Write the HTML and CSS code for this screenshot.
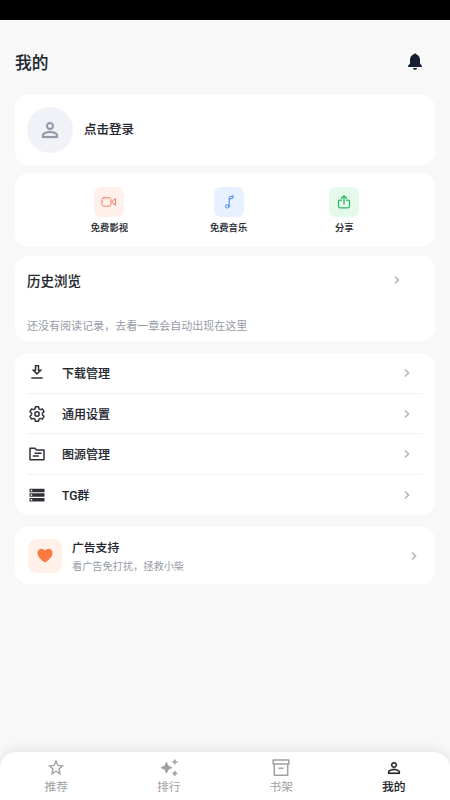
FILE: index.html
```html
<!DOCTYPE html>
<html lang="zh-CN">
<head>
<meta charset="utf-8">
<meta name="viewport" content="width=device-width, initial-scale=1">
<title>我的</title>
<link rel="stylesheet" href="styles.css">
</head>
<body>
<svg class="defs" aria-hidden="true">
  <symbol id="chevron" viewBox="0 0 8 10"><path d="M2 1.500 5.500 5 2 8.500" fill="none" stroke="currentColor" stroke-width="1.700"/></symbol>
  <symbol id="person" viewBox="0 0 24 24"><path fill="currentColor" stroke="currentColor" stroke-width=".2" d="M12 5.900a2.100 2.100 0 1 1 0 4.200 2.100 2.100 0 0 1 0-4.200m0 9c2.970 0 6.100 1.460 6.100 2.100v1.100H5.900V17c0-.64 3.130-2.100 6.100-2.100M12 4C9.790 4 8 5.790 8 8s1.790 4 4 4 4-1.790 4-4-1.790-4-4-4m0 9c-2.670 0-8 1.340-8 4v3h16v-3c0-2.660-5.330-4-8-4"/></symbol>
</svg>
<div class="status-bar"></div>
<header class="header">
  <h1>我的</h1>
  <svg class="bell" viewBox="0 0 16 18"><path fill="currentColor" d="M8 .5c.8 0 1.300.4 1.500 1 2.200.7 3.500 2.700 3.500 5.500v3.500l1.900 2.200v1.200H1.100v-1.200L3 10.500V7c0-2.800 1.300-4.800 3.500-5.500C6.700.9 7.200.5 8 .5M5.900 15h4.200c-.2 1.200-1 1.800-2.100 1.800S6.100 16.200 5.900 15"/></svg>
</header>
<main>
  <section class="card login">
    <div class="avatar"><svg viewBox="0 0 24 24"><use href="#person"/></svg></div>
    <span>点击登录</span>
  </section>
  <section class="card shortcuts">
    <a class="shortcut video"><span class="tile"><svg viewBox="0 0 16 16"><rect x="1" y="3.800" width="9" height="8.400" rx="1.800"/><path d="m11.500 7 3-2.300v6.600l-3-2.300z"/></svg></span>免费影视</a>
    <a class="shortcut music"><span class="tile"><svg viewBox="0 0 16 16"><ellipse cx="6.300" cy="12.400" rx="1.900" ry="1.600"/><path d="M8.200 12.400V3.200L12 1.700V4L8.200 5.500"/></svg></span>免费音乐</a>
    <a class="shortcut share"><span class="tile"><svg viewBox="0 0 16 16"><path d="M5.500 6.200H4c-1 0-1.500.5-1.500 1.500v4.600c0 1 .5 1.500 1.500 1.500h8c1 0 1.500-.5 1.500-1.500V7.700c0-1-.5-1.500-1.500-1.500h-1.500M8 10V2M5.500 4.300 8 1.800l2.500 2.500"/></svg></span>分享</a>
  </section>
  <section class="card history">
    <div class="history-head"><h2>历史浏览</h2><svg class="chevron"><use href="#chevron"/></svg></div>
    <p>还没有阅读记录，去看一章会自动出现在这里</p>
  </section>
  <nav class="card menu">
    <a><svg class="icon" viewBox="0 0 18 18"><path d="M7.500 1.800h3v4.400h2.200L9 9.900 5.300 6.200h2.200zM3.300 13.900h11.400" fill="none" stroke="currentColor" stroke-width="1.500"/></svg><span>下载管理</span><svg class="chevron"><use href="#chevron"/></svg></a>
    <a><svg class="icon" viewBox="0 0 18 18"><path d="m7.400 1.800-.4 2-1.400.8-2-.7L2 6.700l1.600 1.500v1.600L2 11.300l1.600 2.800 2-.7 1.400.8.400 2h3.200l.4-2 1.400-.8 2 .7 1.600-2.800-1.600-1.500V8.200L16 6.700l-1.600-2.800-2 .7-1.400-.8-.4-2z" fill="none" stroke="currentColor" stroke-width="1.500" stroke-linejoin="round"/><circle cx="9" cy="9" r="2.200" fill="none" stroke="currentColor" stroke-width="1.500"/></svg><span>通用设置</span><svg class="chevron"><use href="#chevron"/></svg></a>
    <a><svg class="icon" viewBox="0 0 18 18"><path d="M2 3.300h5l1.500 1.600H16v9.800H2zM6.500 8.200h7M4.800 10.900h6" fill="none" stroke="currentColor" stroke-width="1.500" stroke-linejoin="round"/></svg><span>图源管理</span><svg class="chevron"><use href="#chevron"/></svg></a>
    <a><svg class="icon" viewBox="0 0 18 18"><path fill="currentColor" fill-rule="evenodd" d="M1.500 2.700h15v3.500h-15zm1.200 1v1.500h1.500V3.700zM1.500 7.300h15v3.500h-15zm1.200 1v1.500h1.500V8.300zM1.500 11.900h15v3.500h-15zm1.200 1v1.500h1.500v-1.500z"/></svg><span>TG群</span><svg class="chevron"><use href="#chevron"/></svg></a>
  </nav>
  <section class="card support">
    <span class="heart"><svg viewBox="0 0 16 15"><path fill="currentColor" d="M8 14.500C4 11.600.5 8.600.5 4.900.5 2.400 2.200.7 4.400.7 6 .7 7.300 1.500 8 2.800 8.700 1.500 10 .7 11.600.7c2.200 0 3.900 1.700 3.900 4.200 0 3.700-3.500 6.700-7.500 9.600"/></svg></span>
    <div class="support-text"><h3>广告支持</h3><p>看广告免打扰，拯救小柴</p></div>
    <svg class="chevron"><use href="#chevron"/></svg>
  </section>
</main>
<nav class="tabs">
  <a><svg viewBox="0 0 18 18"><path d="m9 2.200 1.900 4.200 4.500.5-3.400 3.100 1 4.500-4-2.300-4 2.300L6 10 2.600 6.900l4.500-.5z" fill="none" stroke="currentColor" stroke-width="1.400"/></svg>推荐</a>
  <a><svg viewBox="0 0 18 18"><path fill="currentColor" stroke="currentColor" stroke-width=".6" d="m6.500 3.200 1.900 3.700 3.700 1.800-3.700 1.800-1.900 3.700-1.900-3.700L.9 8.700l3.700-1.800zM14.900.4l.8 1.800 1.800.8-1.800.8-.8 1.800-.8-1.800-1.800-.8 1.800-.8zM14.900 11.800l.8 1.800 1.800.8-1.800.8-.8 1.800-.8-1.800-1.800-.8 1.800-.8z"/></svg>排行</a>
  <a><svg viewBox="0 0 18 18"><path d="M1.200 1h15.600v4H1.200zM2.300 5v11.300h13.400V5M6.500 9.300h5" fill="none" stroke="currentColor" stroke-width="1.500" stroke-linejoin="round"/></svg>书架</a>
  <a class="active"><svg viewBox="0 0 24 24"><use href="#person"/></svg>我的</a>
</nav>
</body>
</html>
```
FILE: styles.css
```css
* { box-sizing: border-box; }
body {
  margin: 0;
  height: 800px;
  display: flex;
  flex-direction: column;
  overflow: hidden;
  background: #f8f8f8;
  color: #24272e;
  font-family: Roboto, "Noto Sans CJK SC", sans-serif;
}
h1, h2, h3, p { margin: 0; }
h1, h2, h3 { font-weight: 500; }
h1, h2, h3, .login, .shortcut, .menu, .active { -webkit-text-stroke: .12px currentColor; }
svg { display: block; flex: none; }
.defs { width: 0; height: 0; position: absolute; }
.status-bar { height: 20px; background: #000; flex: none; }
.header {
  height: 75px;
  padding: 9px 27px 0 15px;
  display: flex;
  align-items: center;
  justify-content: space-between;
}
h1 { padding-top: 4px; font-size: 16.700px; line-height: 24px; color: #20252e; }
.bell { width: 16px; height: 18px; color: #172033; }
main { padding: 0 15px; }
.card { background: #fff; border-radius: 14px; }
.chevron { width: 8px; height: 10px; color: #b8b8ba; }
.login {
  height: 70px;
  padding-left: 12px;
  display: flex;
  align-items: center;
  gap: 11px;
  font-size: 12.500px;
  font-weight: 500;
}
.login span { padding-bottom: 4px; }
.avatar {
  width: 46px;
  height: 46px;
  border-radius: 50%;
  background: #f0f2f7;
  color: #9498aa;
  display: grid;
  place-items: center;
}
.avatar svg { width: 24px; height: 24px; }
.shortcuts {
  margin-top: 8px;
  height: 74px;
  padding: 14px 0 0;
  display: flex;
  justify-content: center;
  gap: 82px;
}
.shortcut {
  display: flex;
  flex-direction: column;
  align-items: center;
  gap: 4px;
  font-size: 9.300px;
  line-height: 14px;
  font-weight: 500;
}
.tile { width: 30px; height: 30px; border-radius: 7px; display: grid; place-items: center; }
.tile svg { width: 16px; height: 16px; fill: none; stroke: currentColor; stroke-width: 1; stroke-linejoin: round; stroke-linecap: round; }
.video .tile { background: #fff0eb; color: #ef8260; }
.music .tile { background: #e7f1ff; color: #4386df; }
.share .tile { background: #e3f9e9; color: #32ba68; }
.share svg { stroke-width: 1.300; }
.history { margin-top: 9px; height: 85px; padding: 14px 12px 0; }
.history-head { height: 22px; padding-right: 22px; display: flex; align-items: center; justify-content: space-between; }
.history-head .chevron { margin-bottom: 2px; }
h2 { font-size: 13.500px; line-height: 22px; }
.history p { margin-top: 26px; font-size: 11.030px; line-height: 18px; color: #969ba7; }
.menu { margin-top: 12px; height: 162px; padding: 0 13px 0 12px; }
.menu a { height: 40.700px; display: flex; align-items: center; padding: 0 11px 0 1px; border-bottom: 1px solid #f1f1f2; font-size: 12px; line-height: 18px; font-weight: 500; }
.menu a:last-child { height: 40px; border: 0; }
.icon { width: 18px; height: 18px; color: #303238; }
.menu span { flex: 1; margin-left: 16px; padding-top: 2px; }
.menu a:last-child span { padding-top: 1px; }
.support { margin-top: 12px; height: 57px; padding: 0 17.500px 0 13px; display: flex; align-items: center; }
.heart { width: 34px; height: 34px; border-radius: 9px; background: #fff1e7; color: #fc7942; display: grid; place-items: center; }
.heart svg { width: 16px; height: 15px; }
.support-text { flex: 1; margin-left: 10px; padding-top: 2px; }
h3 { font-size: 11.800px; line-height: 19px; }
.support-text p { font-size: 10.200px; line-height: 17px; color: #969ba7; }
.tabs {
  margin-top: auto;
  height: 48px;
  flex: none;
  padding-top: 7px;
  display: grid;
  grid-template-columns: repeat(4, 1fr);
  background: #fff;
  border-radius: 16px 16px 0 0;
  box-shadow: 0 -2px 12px rgba(0, 0, 0, .09);
}
.tabs a { display: flex; flex-direction: column; align-items: center; gap: 2px; font-size: 11.800px; line-height: 17px; color: #a0a0a0; }
.tabs svg { width: 18px; height: 18px; }
.tabs .active { color: #24262b; font-weight: 500; }
```
